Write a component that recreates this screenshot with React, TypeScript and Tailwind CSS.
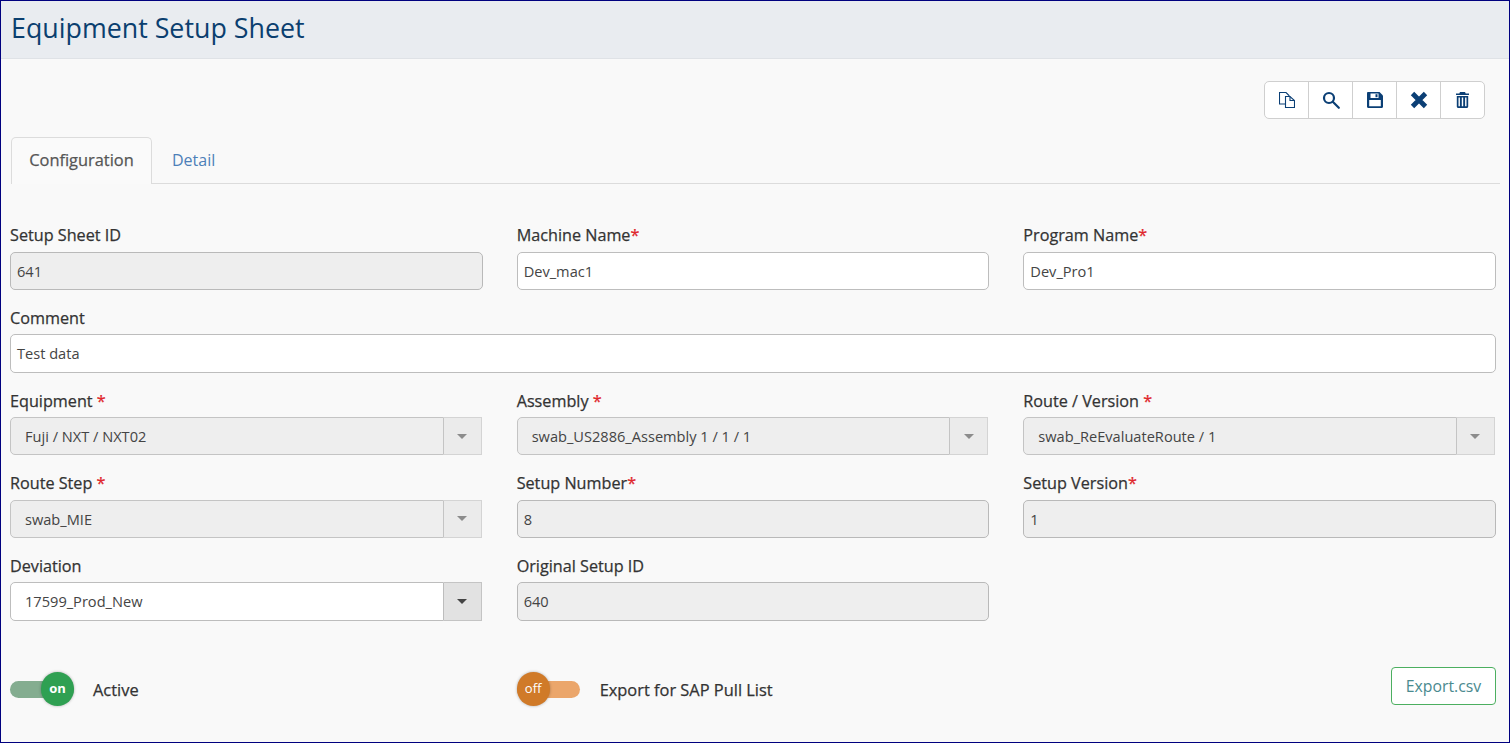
import React from 'react';

const font = "font-['Open_Sans',sans-serif]";

const Label = ({ text, star, spaced }: { text: string; star?: boolean; spaced?: boolean }) => (
  <label className="block h-[20.6px] pt-[0.6px] mb-[6.45px] text-[16.2px] leading-5 font-medium text-[#333] [-webkit-text-stroke:0.25px]">
    {text}
    {star && <span className="text-[#e0262c]">{spaced ? ' *' : '*'}</span>}
  </label>
);

const TextField = ({ value, disabled }: { value: string; disabled?: boolean }) => (
  <div
    className={`h-[38.4px] rounded-[5px] border px-[6px] pt-[1.6px] flex items-center text-[14.6px] text-[#444] ${
      disabled ? 'bg-[#eeeeee] border-[#b9b9b9]' : 'bg-white border-[#bdbdbd]'
    }`}
  >
    {value}
  </div>
);

const Combo = ({ value, disabled }: { value: string; disabled?: boolean }) => (
  <div className="flex h-[38.4px] mr-[1px] text-[14.6px] text-[#444]">
    <div
      className={`flex-1 rounded-l-[5px] border pl-[14px] pt-[1.6px] flex items-center ${
        disabled ? 'bg-[#eeeeee] border-[#c4c4c4]' : 'bg-white border-[#bdbdbd]'
      }`}
    >
      {value}
    </div>
    <div
      className={`w-[38px] border border-l-0 flex items-center justify-center ${
        disabled ? 'bg-[#ebebeb] border-[#d4d4d4]' : 'bg-[#e2e2e2] border-[#c4c4c4]'
      }`}
    >
      <span
        className={`w-0 h-0 border-x-[5px] border-x-transparent border-t-[5px] ${
          disabled ? 'border-t-[#8c8c8c]' : 'border-t-[#444]'
        }`}
      />
    </div>
  </div>
);

const Field = ({ children }: { children: React.ReactNode }) => <div className="mb-[17.2px]">{children}</div>;

const ToolButton = ({ children, last }: { children: React.ReactNode; last?: boolean }) => (
  <button className={`h-full flex items-center justify-center ${last ? 'w-[43px]' : 'w-11 border-r border-[#cfcfcf]'}`}>
    {children}
  </button>
);

const navy = '#0b3f75';

export default function App() {
  return (
    <div className={`${font} h-[743px] w-[1510px] border border-[#00007f] bg-[#f9f9f9] overflow-hidden`}>
      <div className="h-[58px] bg-[#e9ecf0] border-b border-[#dfe2e6] pl-[10px] flex items-center">
        <h1 className="text-[26.8px] text-[#0b3f6f] pb-[3px]">Equipment Setup Sheet</h1>
      </div>

      <div className="px-[9px]">
        <div className="flex justify-end pt-[22px] pr-[15px]">
          <div className="flex h-[38px] bg-white border border-[#cfcfcf] rounded-[5px]">
            <ToolButton>
              <svg width="16" height="16" viewBox="0 0 16 16" fill="none" stroke={navy} strokeWidth="1.1">
                <path d="M.5.5h6.500l3 3v8.500H.5z" fill="#fff" />
                <path d="M6.500 4.500h4.500l4.500 4v7h-9z" fill="#fff" />
                <path d="M11 4.500v4h4.500" />
              </svg>
            </ToolButton>
            <ToolButton>
              <svg width="18" height="18" viewBox="0 0 18 18" fill="none" stroke={navy} strokeWidth="2.2">
                <circle cx="7" cy="7" r="5" />
                <path d="M10.800 10.800l6 6" strokeLinecap="round" />
              </svg>
            </ToolButton>
            <ToolButton>
              <svg width="16" height="16" viewBox="0 0 16 16" fill={navy}>
                <path d="M0 1.200C0 .5.5 0 1.200 0h11.300L16 3.500v11.300c0 .7-.5 1.200-1.200 1.200H1.200C.5 16 0 15.500 0 14.800z" />
                <path d="M3.500 1.500h8v4.500h-8zM2.200 8h11.600v6.200H2.200z" fill="#fff" />
                <path d="M8.500 2.200h2v3h-2z" />
              </svg>
            </ToolButton>
            <ToolButton>
              <svg width="18" height="18" viewBox="0 0 18 18" stroke={navy} strokeWidth="4.800">
                <path d="M2.500 2.500l13 13M15.500 2.500l-13 13" />
              </svg>
            </ToolButton>
            <ToolButton last>
              <svg width="13" height="16" viewBox="0 0 13 16" fill={navy}>
                <path d="M4 0h5l.7 1.500H13V3H0V1.500h3.300zM.8 4h11.400v10.500c0 .8-.7 1.500-1.500 1.500H2.300c-.8 0-1.500-.7-1.500-1.500z" />
                <path d="M2.500 5.500h1.400v8.800H2.500zM5.800 5.500h1.400v8.800H5.800zM9.100 5.500h1.400v8.800H9.100z" fill="#fff" />
              </svg>
            </ToolButton>
          </div>
        </div>

        <div className="flex mt-[18px] h-[47px] border-b border-[#dcdcdc] ml-[1px] text-[16.4px]">
          <div className="h-[47px] w-[141px] pb-[2px] bg-[#fafafa] border border-b-0 border-[#dcdcdc] rounded-t-[5px] flex items-center justify-center font-medium text-[#555] [-webkit-text-stroke:0.25px]">
            Configuration
          </div>
          <div className="ml-5 h-[46px] text-base flex items-center text-[#4d7fb8]">Detail</div>
        </div>

        <div className="mt-[40.8px] grid grid-cols-3 gap-x-[34px] w-[1486px]">
          <Field>
            <Label text="Setup Sheet ID" />
            <TextField value="641" disabled />
          </Field>
          <Field>
            <Label text="Machine Name" star />
            <TextField value="Dev_mac1" />
          </Field>
          <Field>
            <Label text="Program Name" star />
            <TextField value="Dev_Pro1" />
          </Field>

          <div className="col-span-3">
            <Field>
              <Label text="Comment" />
              <TextField value="Test data" />
            </Field>
          </div>

          <Field>
            <Label text="Equipment" star spaced />
            <Combo value="Fuji / NXT / NXT02" disabled />
          </Field>
          <Field>
            <Label text="Assembly" star spaced />
            <Combo value="swab_US2886_Assembly 1 / 1 / 1" disabled />
          </Field>
          <Field>
            <Label text="Route / Version" star spaced />
            <Combo value="swab_ReEvaluateRoute / 1" disabled />
          </Field>

          <Field>
            <Label text="Route Step" star spaced />
            <Combo value="swab_MIE" disabled />
          </Field>
          <Field>
            <Label text="Setup Number" star />
            <TextField value="8" disabled />
          </Field>
          <Field>
            <Label text="Setup Version" star />
            <TextField value="1" disabled />
          </Field>

          <Field>
            <Label text="Deviation" />
            <Combo value="17599_Prod_New" />
          </Field>
          <Field>
            <Label text="Original Setup ID" />
            <TextField value="640" disabled />
          </Field>
        </div>

        <div className="mt-[29px] grid grid-cols-3 gap-x-[34px] w-[1486px] h-[38px]">
          <div className="flex items-center pt-[8px]">
            <div className="relative w-16 h-[17px] rounded-full bg-[#84ad90]">
              <span className="absolute left-[31px] -top-[9px] w-[33px] h-[34px] rounded-full bg-[#2fa052] shadow-[0_0_3px_rgba(0,0,0,0.3)] flex items-center justify-center text-[13px] font-bold leading-none text-white pb-[1px]">
                on
              </span>
            </div>
            <span className="ml-[19px] mt-[1px] text-[16.4px] font-medium text-[#333] [-webkit-text-stroke:0.25px]">Active</span>
          </div>
          <div className="flex items-center pt-[8px]">
            <div className="relative w-[63px] h-[17px] rounded-full bg-[#eba66b]">
              <span className="absolute left-0 -top-[9px] w-[33px] h-[34px] rounded-full bg-[#d07a28] shadow-[0_0_3px_rgba(0,0,0,0.3)] flex items-center justify-center text-[13px] leading-none text-white pb-[1px]">
                off
              </span>
            </div>
            <span className="ml-5 mt-[1px] text-[16.4px] font-medium text-[#333] [-webkit-text-stroke:0.25px]">Export for SAP Pull List</span>
          </div>
          <div className="flex justify-end">
            <button className="w-[105px] h-[38px] pt-[2px] bg-white border border-[#4caf60] rounded-[4px] text-[15.8px] text-[#4a8a8f]">
              Export.csv
            </button>
          </div>
        </div>
      </div>
    </div>
  );
}
